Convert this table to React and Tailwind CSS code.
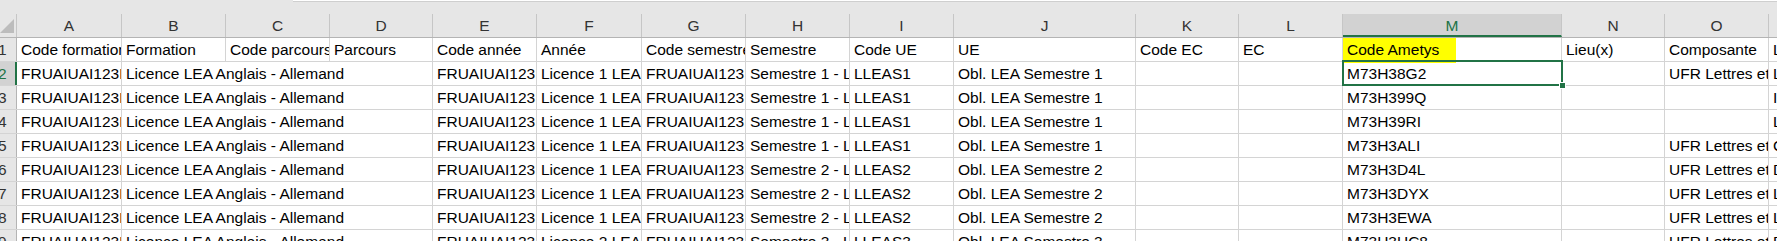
import React from "react";

const COLS = [
  ["A", 105], ["B", 104], ["C", 104], ["D", 103], ["E", 104], ["F", 105],
  ["G", 104], ["H", 104], ["I", 104], ["J", 182], ["K", 103], ["L", 104],
  ["M", 219], ["N", 103], ["O", 104], ["P", 104],
];

const HEAD = [
  "Code formation", "Formation", "Code parcours", "Parcours", "Code année", "Année",
  "Code semestre", "Semestre", "Code UE", "UE", "Code EC", "EC", "Code Ametys",
  "Lieu(x)", "Composante", "Libellé",
];

const CODE = "FRUAIUAI123LEA";
const FORM = "Licence LEA Anglais - Allemand";
const UFR = "UFR Lettres et Langues";

function row(year, sem, ametys, ufr, last) {
  return [
    CODE, FORM, "", "", CODE, `Licence ${year} LEA Anglais`, CODE,
    `Semestre ${sem} - Licence ${year}`, `LLEAS${sem}`, `Obl. LEA Semestre ${sem}`,
    "", "", ametys, "", ufr ? UFR : "", last,
  ];
}

const ROWS = [
  HEAD,
  row(1, 1, "M73H38G2", true, "L"),
  row(1, 1, "M73H399Q", false, "I"),
  row(1, 1, "M73H39RI", false, "L"),
  row(1, 1, "M73H3ALI", true, "C"),
  row(1, 2, "M73H3D4L", true, "D"),
  row(1, 2, "M73H3DYX", true, "L"),
  row(1, 2, "M73H3EWA", true, "L"),
  row(2, 3, "M73H3HC8", true, "D"),
];

function Cells({ cells, isHead }) {
  const out = [];
  let i = 0;
  while (i < COLS.length) {
    // long text spills over empty neighbours (Formation column)
    let span = 1;
    if (!isHead && i === 1) span = 3;
    let w = 0;
    for (let k = i; k < i + span; k++) w += COLS[k][1];
    out.push(
      <div
        key={i}
        style={{ width: w }}
        className="shrink-0 h-full overflow-hidden whitespace-nowrap border-r border-[#d4d4d4] pl-[4px] leading-[24px]"
      >
        {cells[i]}
      </div>
    );
    i += span;
  }
  return out;
}

export default function App() {
  return (
    <div className="w-[1777px] h-[241px] overflow-hidden bg-[#e6e6e6] font-['Liberation_Sans',Arial,sans-serif] text-[15.5px] text-black">
      {/* formula bar edge */}
      <div className="h-[14px]">
        <div className="ml-[293px] h-[2px] bg-white border-b border-[#cfcfcf]" />
      </div>

      <div className="relative isolate bg-white">
        {/* column letters */}
        <div className="flex h-[24px] bg-[#e6e6e6] border-b border-[#b4b4b4]">
          <div className="w-[17px] shrink-0 h-full border-r border-[#c6c6c6] relative">
            <svg className="absolute left-0 top-[4px]" width="15" height="16" viewBox="0 0 15 16">
              <path d="M14 1 L14 15 L0 15 Z" fill="#bcbcbc" />
            </svg>
          </div>
          {COLS.map(([l, w]) => (
            <div
              key={l}
              style={{ width: w }}
              className={
                l === "M"
                  ? "shrink-0 h-full text-center leading-[24px] border-r border-[#c6c6c6] bg-[#d2d2d2] text-[#217346] border-b-2 border-b-[#217346]"
                  : "shrink-0 h-full text-center leading-[24px] border-r border-[#c6c6c6] text-[#333]"
              }
            >
              {l}
            </div>
          ))}
        </div>

        {/* yellow highlight behind "Code Ametys" */}
        <div className="absolute -z-10 left-[1343px] top-[23px] w-[113px] h-[26px] bg-[#ffff00]" />

        {ROWS.map((cells, r) => (
          <div key={r} className="flex h-[24px] border-b border-[#d4d4d4]">
            <div
              className={
                r === 1
                  ? "w-[17px] shrink-0 h-full overflow-hidden bg-[#d2d2d2] text-[#217346] border-r-2 border-[#217346] leading-[24px]"
                  : "w-[17px] shrink-0 h-full overflow-hidden bg-[#e6e6e6] text-[#333] border-r border-[#b4b4b4] leading-[24px]"
              }
            >
              <span className="-ml-[2px] block">{r + 1}</span>
            </div>
            <Cells cells={cells} isHead={r === 0} />
          </div>
        ))}

        {/* selected cell M2 */}
        <div className="absolute left-[1342px] top-[46px] w-[221px] h-[26px] border-2 border-[#217346]" />
        <div className="absolute left-[1559px] top-[68px] w-[7px] h-[7px] bg-[#217346] border border-white" />
      </div>
    </div>
  );
}
